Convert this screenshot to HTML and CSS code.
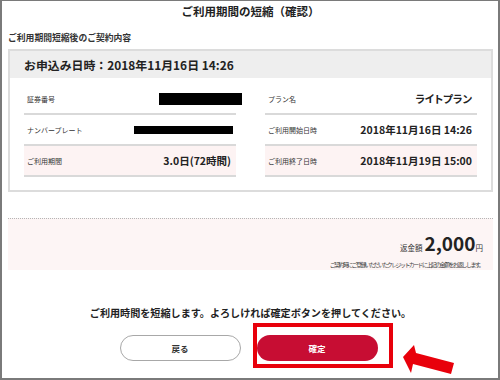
FILE: index.html
```html
<!DOCTYPE html>
<html lang="ja">
<head>
    <meta charset="UTF-8">
    <title>ご利用期間の短縮（確認）</title>
    <link rel="stylesheet" href="styles.css">
</head>
<body>
    <div class="frame">
        <h1 class="title">ご利用期間の短縮（確認）</h1>

        <p class="section-label">ご利用期間短縮後のご契約内容</p>

        <div class="card">
            <div class="card-head">お申込み日時：2018年11月16日 14:26</div>
            <div class="card-body">
                <div class="col">
                    <div class="row">
                        <span class="label">証券番号</span>
                        <span class="mask mask-1"></span>
                    </div>
                    <div class="row">
                        <span class="label">ナンバープレート</span>
                        <span class="mask mask-2"></span>
                    </div>
                    <div class="row row-pink">
                        <span class="label">ご利用期間</span>
                        <span class="value">3.0日(72時間)</span>
                    </div>
                </div>
                <div class="col">
                    <div class="row">
                        <span class="label">プラン名</span>
                        <span class="value value-kana">ライトプラン</span>
                    </div>
                    <div class="row">
                        <span class="label">ご利用開始日時</span>
                        <span class="value">2018年11月16日 14:26</span>
                    </div>
                    <div class="row row-pink">
                        <span class="label">ご利用終了日時</span>
                        <span class="value">2018年11月19日 15:00</span>
                    </div>
                </div>
            </div>
        </div>

        <div class="refund">
            <div class="refund-line"><span class="refund-label">返金額</span><span class="refund-amount">2,000</span><span class="refund-unit">円</span></div>
            <p class="refund-note">ご契約時にご登録いただいたクレジットカードに上記の金額をお返しします。</p>
        </div>

        <p class="message">ご利用時間を短縮します。よろしければ確定ボタンを押してください。</p>

        <div class="buttons">
            <button class="btn btn-back">戻る</button>
            <button class="btn btn-ok">確定</button>
        </div>

        <!-- 注釈（赤枠と矢印） -->
        <div class="highlight"></div>
        <svg class="arrow" width="60" height="40" viewBox="0 0 60 40">
            <polygon points="3,17 14,5 16,13 54,23 51,34 13,24 11,33" fill="#e8000b"/>
        </svg>
    </div>
</body>
</html>
```

FILE: styles.css
```css
* {
    box-sizing: border-box;
    margin: 0;
    padding: 0;
}

body {
    font-family: "Noto Sans CJK JP", "Noto Sans", sans-serif;
    background: #fff;
    color: #222;
}

.frame {
    position: relative;
    width: 500px;
    height: 380px;
    border: 2px solid #7a7a7a;
    border-top-width: 1px;
    padding: 0 5px 0 6px;
    overflow: hidden;
}

.title {
    text-align: center;
    font-size: 11.5px;
    font-weight: bold;
    line-height: 20px;
    color: #222;
}

.section-label {
    margin-top: 11px;
    font-size: 8.8px;
    line-height: 12px;
    font-weight: bold;
    color: #333;
}

.card {
    margin-top: 5px;
    border: 2px solid #dcdcdc;
}

.card-head {
    height: 27px;
    line-height: 27px;
    background: #eeeeee;
    padding-left: 14px;
    font-size: 11.9px;
    font-weight: bold;
    color: #222;
}

.card-body {
    display: flex;
    gap: 29px;
    padding: 6px 14px 13px;
}

.col {
    flex: 1;
}

.row {
    display: flex;
    justify-content: space-between;
    align-items: center;
    height: 31px;
    padding: 0 5px 0 3px;
    border-bottom: 2px solid #d9d9d9;
}

.row-pink {
    background: #fdf3f3;
}

.label {
    font-size: 7px;
    color: #333;
}

.value {
    font-size: 10.5px;
    font-weight: bold;
    color: #222;
}

.value-kana {
    font-feature-settings: "palt";
}

.mask {
    display: inline-block;
    background: #000;
}

.mask-1 {
    width: 83px;
    height: 12px;
    margin-right: -11px;
}

.mask-2 {
    width: 99px;
    height: 8px;
    margin-right: -2px;
}

.refund {
    margin-top: 26px;
    height: 52px;
    border-top: 1px dotted #b5b5b5;
    background: #fdf5f5;
    padding: 13px 10px 0 0;
    text-align: right;
}

.refund-line {
    line-height: 22px;
}

.refund-label,
.refund-unit {
    font-size: 7.5px;
    color: #333;
}

.refund-label {
    margin-right: 2px;
}

.refund-amount {
    font-size: 19px;
    font-weight: bold;
    color: #222;
}

.refund-note {
    margin-top: 2px;
    font-size: 6px;
    letter-spacing: -1.6px;
    line-height: 8px;
    color: #444;
}

.message {
    margin-top: 36px;
    text-align: center;
    font-size: 10.1px;
    line-height: 14px;
    font-weight: bold;
    color: #222;
}

.buttons {
    display: flex;
    justify-content: center;
    gap: 16px;
    margin-top: 15px;
    padding-right: 4px;
}

.btn {
    width: 121px;
    height: 26px;
    border-radius: 13px;
    font-family: inherit;
    font-size: 8.5px;
    font-weight: bold;
}

.btn-back {
    background: #fff;
    border: 1px solid #a8a8a8;
    color: #333;
}

.btn-ok {
    background: #c70d33;
    border: none;
    color: #fff;
}

.highlight {
    position: absolute;
    left: 251px;
    top: 322px;
    width: 140px;
    height: 45px;
    border: 4px solid #e8000b;
}

.arrow {
    position: absolute;
    left: 398px;
    top: 339px;
}
```
